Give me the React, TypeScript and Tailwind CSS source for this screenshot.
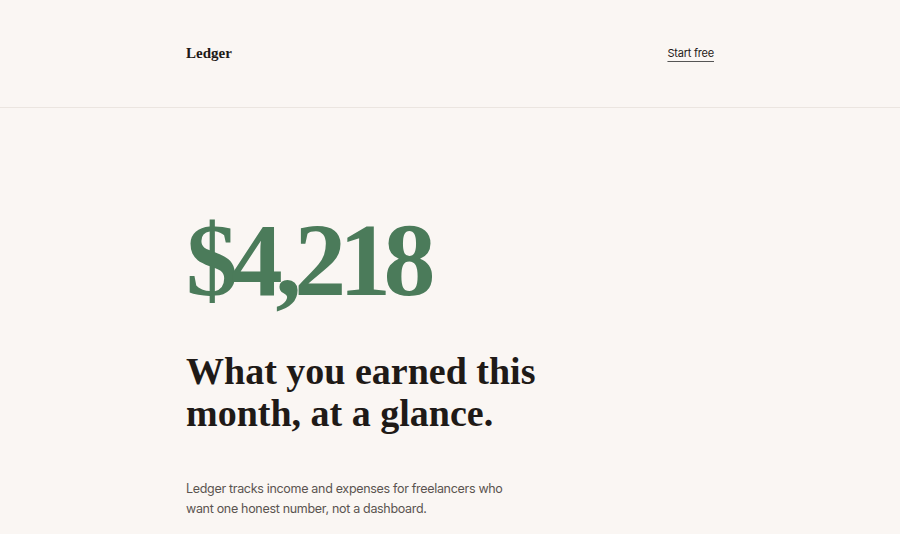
import React from 'react';

const serif = { fontFamily: '"Liberation Serif", "DejaVu Serif", serif' };

export default function App() {
  return (
    <div className="min-h-screen bg-[#faf6f3] text-[#1f1a17]" style={{ fontFamily: 'Inter, "Liberation Sans", sans-serif' }}>
      <header className="border-b border-[#ebe5e0]">
        <div className="mx-auto flex h-[107px] w-[528px] items-center justify-between">
          <span className="text-[15px] font-bold" style={serif}>
            Ledger
          </span>
          <a href="#" className="text-[11px] tracking-[-0.02em] text-[#1f1a17] underline underline-offset-[4px] decoration-[#555]">
            Start free
          </a>
        </div>
      </header>

      <main className="mx-auto w-[528px] pt-[100px]">
        <div className="text-[104px] font-bold leading-none text-[#4b7b5a] tracking-[-0.07em]" style={serif}>
          $4,218
        </div>
        <h1 className="mt-[38px] w-[400px] text-[38px] font-bold leading-[42px]" style={serif}>
          What you earned this month, at a glance.
        </h1>
        <p className="mt-[45px] w-[330px] text-[12.5px] tracking-[-0.025em] leading-[20px] text-[#5a5450]">
          Ledger tracks income and expenses for freelancers who want one honest number, not a dashboard.
        </p>
      </main>
    </div>
  );
}
